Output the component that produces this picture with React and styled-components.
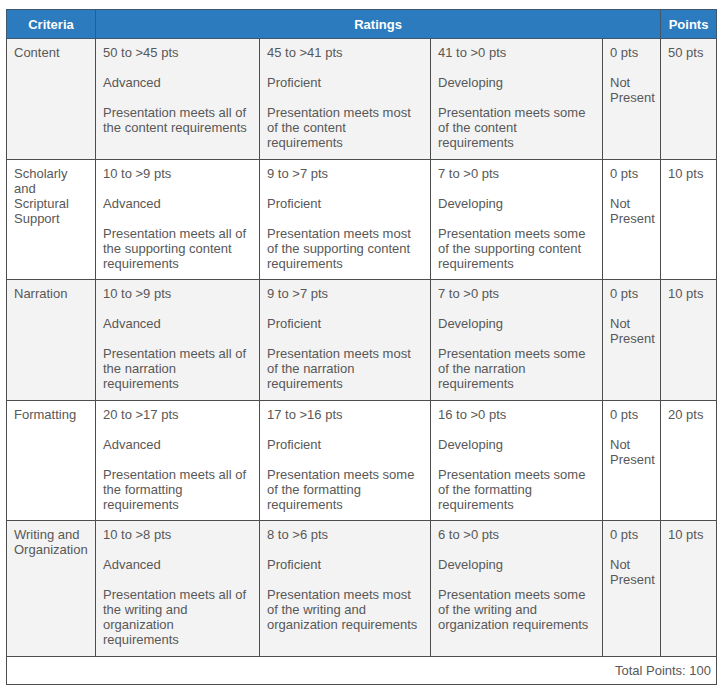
import React from 'react';
import styled, { createGlobalStyle } from 'styled-components';

const GlobalStyle = createGlobalStyle`
  body {
    margin: 0;
    background: #ffffff;
    font-family: "Liberation Sans", Arial, sans-serif;
  }
`;

const Page = styled.div`
  padding: 9px 12px 12px 6px;
`;

const Table = styled.table`
  width: 710px;
  table-layout: fixed;
  border-collapse: collapse;
  border: 1px solid #4d4d4d;
  font-size: 13px;
  line-height: 15px;
  color: #585858;
`;

const HeadCell = styled.th`
  background: #2b7bbe;
  color: #ffffff;
  font-weight: bold;
  text-align: center;
  height: 28px;
  padding: 0 4px;
  border: 1px solid #3f5870;
`;

const Row = styled.tr`
  background: ${(p) => (p.$shade ? '#f3f3f3' : '#ffffff')};
`;

const Cell = styled.td`
  vertical-align: top;
  padding: 6px 6px 8.5px 7px;
  border: 1px solid #4d4d4d;
`;

const TotalCell = styled.td`
  text-align: right;
  padding: 6px 5px 6px;
  height: 15px;
  border: 1px solid #4d4d4d;
  background: #ffffff;
`;

const Block = styled.div`
  & + & {
    margin-top: 15px;
  }
`;

const rubric = [
  {
    name: 'Content',
    points: '50 pts',
    ratings: [
      ['50 to >45 pts', 'Advanced', 'Presentation meets all of the content requirements'],
      ['45 to >41 pts', 'Proficient', 'Presentation meets most of the content requirements'],
      ['41 to >0 pts', 'Developing', 'Presentation meets some of the content requirements'],
    ],
  },
  {
    name: 'Scholarly and Scriptural Support',
    points: '10 pts',
    ratings: [
      ['10 to >9 pts', 'Advanced', 'Presentation meets all of the supporting content requirements'],
      ['9 to >7 pts', 'Proficient', 'Presentation meets most of the supporting content requirements'],
      ['7 to >0 pts', 'Developing', 'Presentation meets some of the supporting content requirements'],
    ],
  },
  {
    name: 'Narration',
    points: '10 pts',
    ratings: [
      ['10 to >9 pts', 'Advanced', 'Presentation meets all of the narration requirements'],
      ['9 to >7 pts', 'Proficient', 'Presentation meets most of the narration requirements'],
      ['7 to >0 pts', 'Developing', 'Presentation meets some of the narration requirements'],
    ],
  },
  {
    name: 'Formatting',
    points: '20 pts',
    ratings: [
      ['20 to >17 pts', 'Advanced', 'Presentation meets all of the formatting requirements'],
      ['17 to >16 pts', 'Proficient', 'Presentation meets some of the formatting requirements'],
      ['16 to >0 pts', 'Developing', 'Presentation meets some of the formatting requirements'],
    ],
  },
  {
    name: 'Writing and Organization',
    points: '10 pts',
    ratings: [
      ['10 to >8 pts', 'Advanced', 'Presentation meets all of the writing and organization requirements'],
      ['8 to >6 pts', 'Proficient', 'Presentation meets most of the writing and organization requirements'],
      ['6 to >0 pts', 'Developing', 'Presentation meets some of the writing and organization requirements'],
    ],
  },
];

export default function App() {
  return (
    <Page>
      <GlobalStyle />
      <Table>
        <colgroup>
          <col style={{ width: 89 }} />
          <col style={{ width: 164 }} />
          <col style={{ width: 171 }} />
          <col style={{ width: 172 }} />
          <col style={{ width: 58 }} />
          <col style={{ width: 56 }} />
        </colgroup>
        <thead>
          <tr>
            <HeadCell>Criteria</HeadCell>
            <HeadCell colSpan={4}>Ratings</HeadCell>
            <HeadCell>Points</HeadCell>
          </tr>
        </thead>
        <tbody>
          {rubric.map((c, i) => (
            <Row key={c.name} $shade={i % 2 === 0}>
              <Cell>{c.name}</Cell>
              {c.ratings.map((r) => (
                <Cell key={r[0]}>
                  {r.map((t) => (
                    <Block key={t}>{t}</Block>
                  ))}
                </Cell>
              ))}
              <Cell>
                <Block>0 pts</Block>
                <Block>Not Present</Block>
              </Cell>
              <Cell>{c.points}</Cell>
            </Row>
          ))}
          <tr>
            <TotalCell colSpan={6}>Total Points: 100</TotalCell>
          </tr>
        </tbody>
      </Table>
    </Page>
  );
}
